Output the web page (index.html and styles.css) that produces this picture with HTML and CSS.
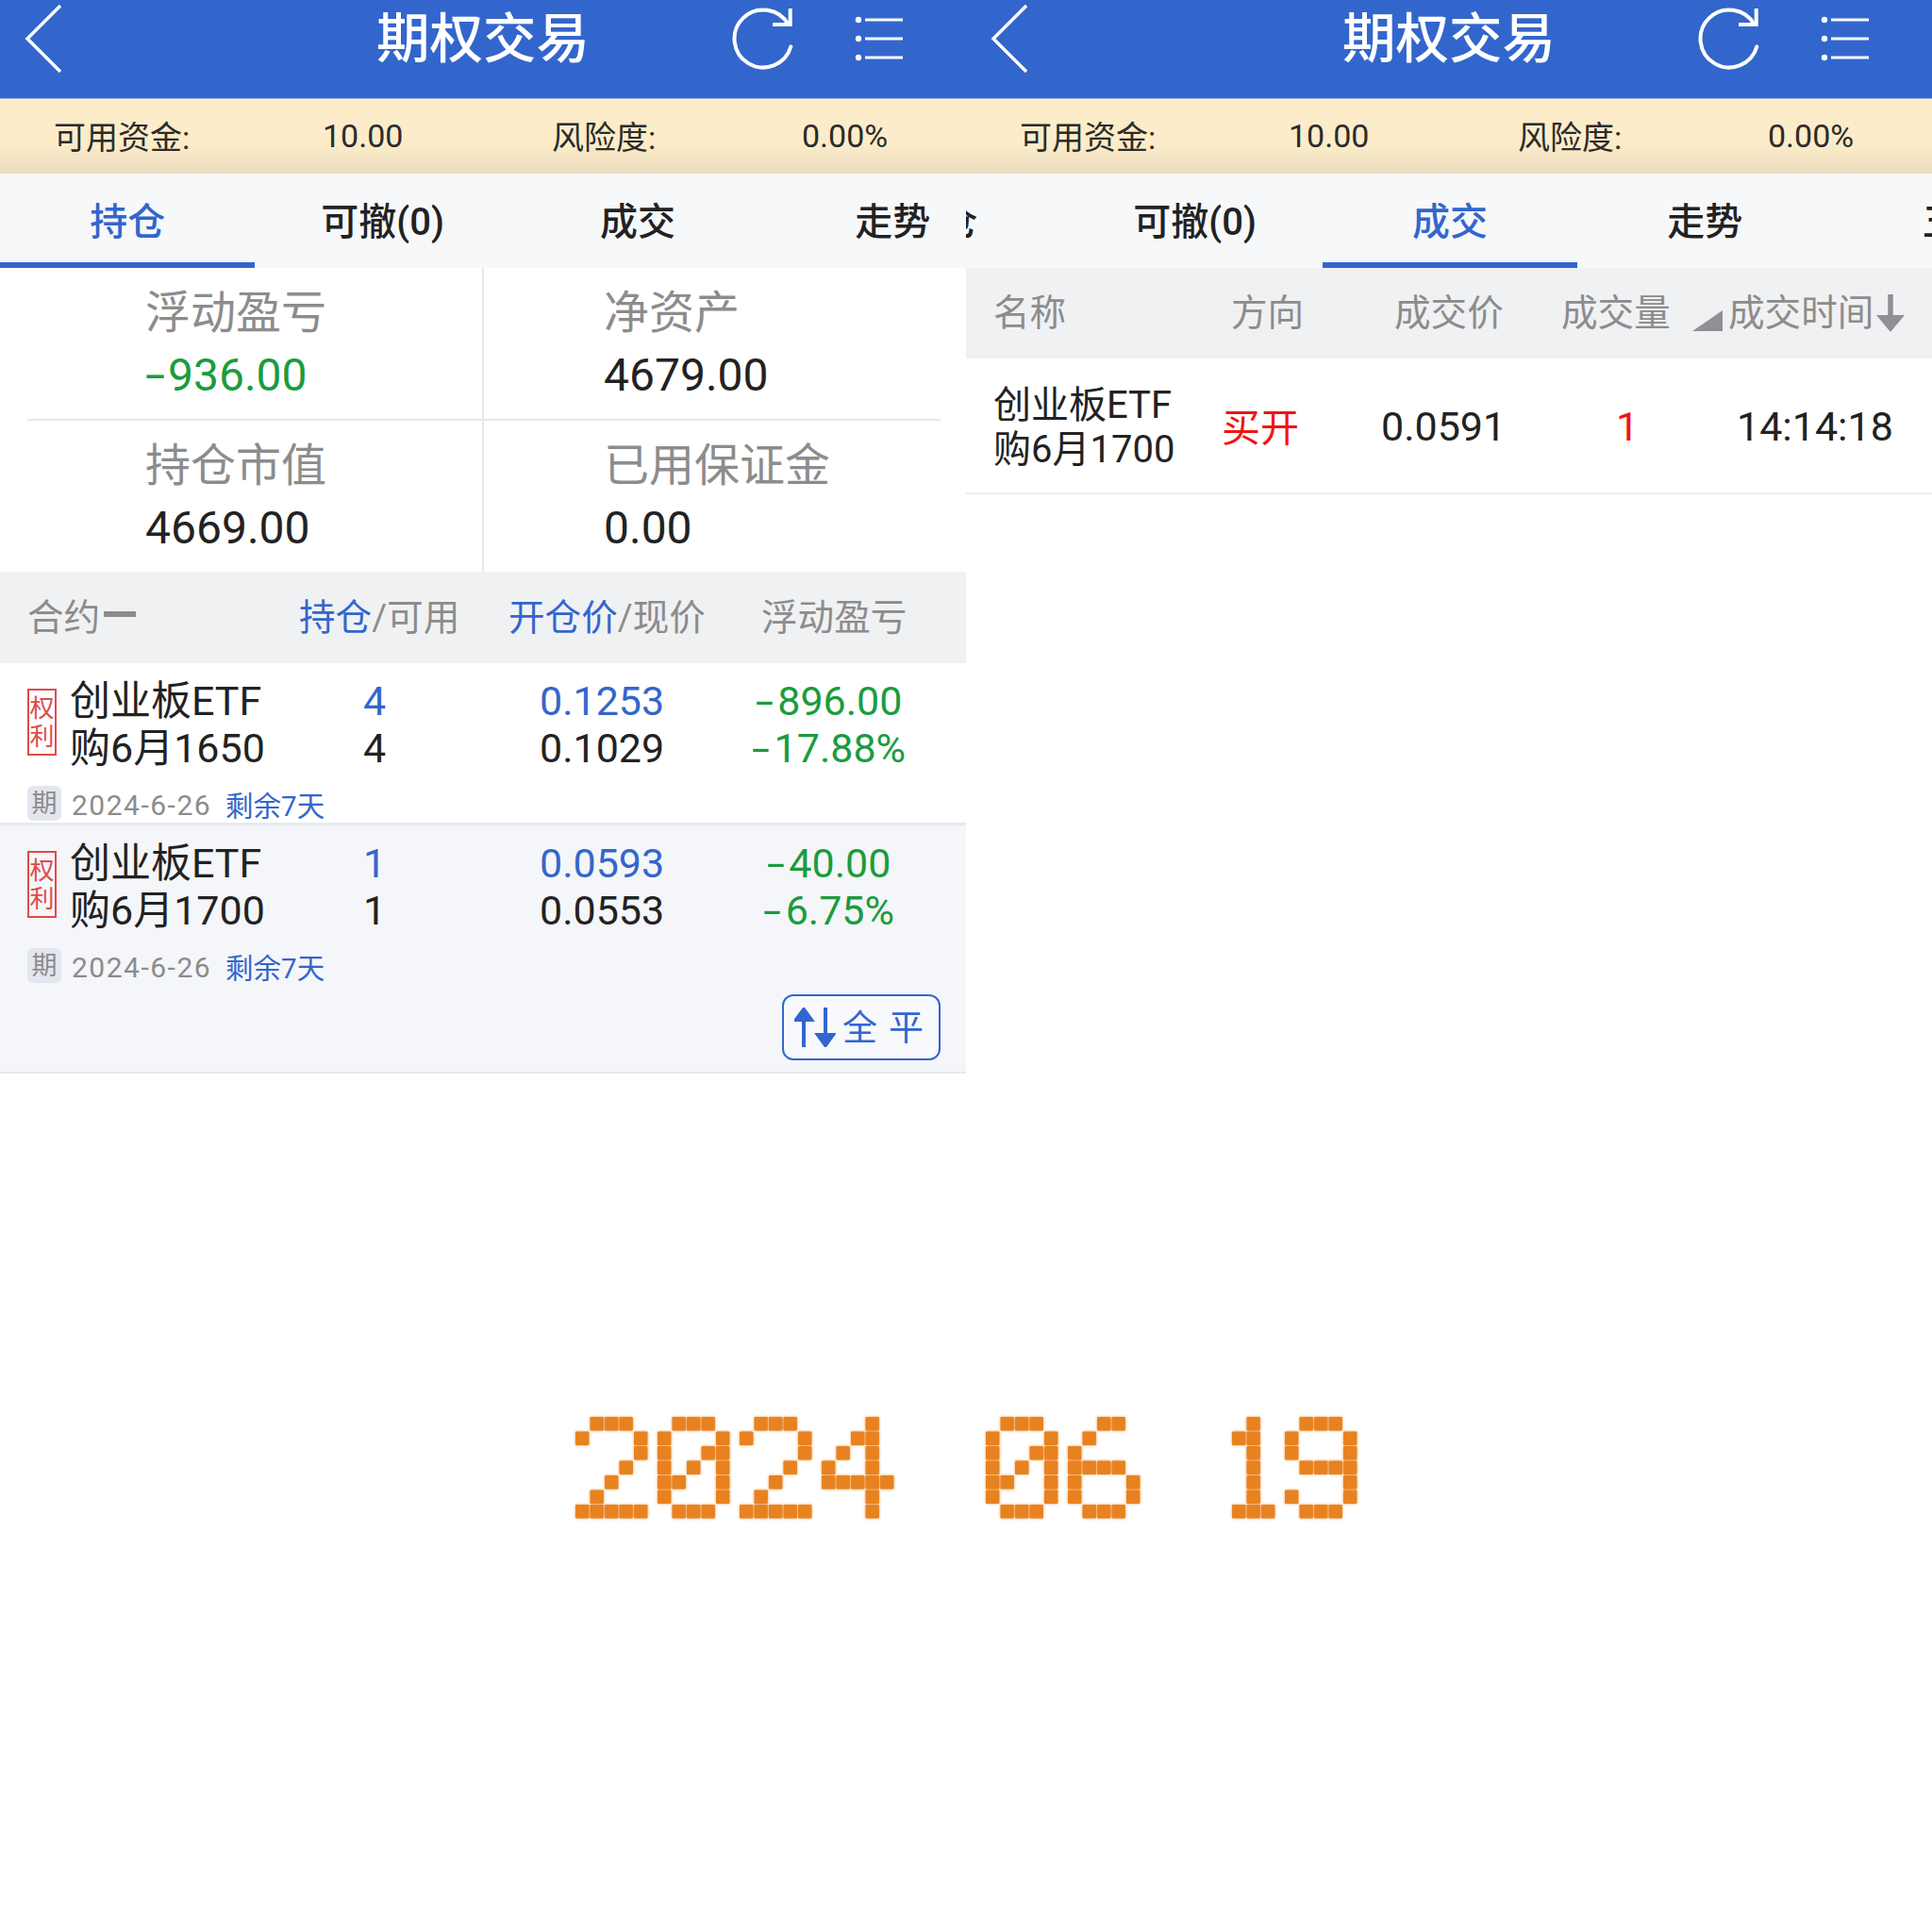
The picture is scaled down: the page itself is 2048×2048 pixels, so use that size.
FILE: index.html
```html
<!DOCTYPE html>
<html lang="zh-CN">
<head>
<meta charset="utf-8">
<title>期权交易</title>
<link rel="stylesheet" href="styles.css">
</head>
<body>
<svg class="defs" width="0" height="0" aria-hidden="true">
  <defs>
    <symbol id="ic-back" viewBox="0 0 44 80"><polyline points="39,6 4,41 39,76" fill="none" stroke="#fff" stroke-width="3.5"/></symbol>
    <symbol id="ic-refresh" viewBox="0 0 70 72"><path d="M62.3 43.5A30.5 30.5 0 1 1 59.6 20" fill="none" stroke="#fff" stroke-width="4" stroke-linecap="round"/><polyline points="61.7,3 61.7,20 43,20" fill="none" stroke="#fff" stroke-width="4"/></symbol>
    <symbol id="ic-list" viewBox="0 0 56 50"><circle cx="4" cy="5" r="3.2" fill="#fff"/><circle cx="4" cy="25" r="3.2" fill="#fff"/><circle cx="4" cy="45" r="3.2" fill="#fff"/><path d="M11 5H51M11 25H51M11 45H51" stroke="#fff" stroke-width="3"/></symbol>
    <symbol id="px-0" viewBox="0 0 78 109"><g class="px"><rect x="15.5" y="0"/><rect x="31" y="0"/><rect x="46.5" y="0"/><rect x="0" y="15.5"/><rect x="62" y="15.5"/><rect x="0" y="31"/><rect x="46.5" y="31"/><rect x="62" y="31"/><rect x="0" y="46.5"/><rect x="31" y="46.5"/><rect x="62" y="46.5"/><rect x="0" y="62"/><rect x="15.5" y="62"/><rect x="62" y="62"/><rect x="0" y="77.5"/><rect x="62" y="77.5"/><rect x="15.5" y="93"/><rect x="31" y="93"/><rect x="46.5" y="93"/></g></symbol>
    <symbol id="px-1" viewBox="0 0 47 109"><g class="px"><rect x="15.5" y="0"/><rect x="0" y="15.5"/><rect x="15.5" y="15.5"/><rect x="15.5" y="31"/><rect x="15.5" y="46.5"/><rect x="15.5" y="62"/><rect x="15.5" y="77.5"/><rect x="0" y="93"/><rect x="15.5" y="93"/><rect x="31" y="93"/></g></symbol>
    <symbol id="px-2" viewBox="0 0 78 109"><g class="px"><rect x="15.5" y="0"/><rect x="31" y="0"/><rect x="46.5" y="0"/><rect x="0" y="15.5"/><rect x="62" y="15.5"/><rect x="62" y="31"/><rect x="46.5" y="46.5"/><rect x="31" y="62"/><rect x="15.5" y="77.5"/><rect x="0" y="93"/><rect x="15.5" y="93"/><rect x="31" y="93"/><rect x="46.5" y="93"/><rect x="62" y="93"/></g></symbol>
    <symbol id="px-4" viewBox="0 0 78 109"><g class="px"><rect x="46.5" y="0"/><rect x="31" y="15.5"/><rect x="46.5" y="15.5"/><rect x="15.5" y="31"/><rect x="46.5" y="31"/><rect x="0" y="46.5"/><rect x="46.5" y="46.5"/><rect x="0" y="62"/><rect x="15.5" y="62"/><rect x="31" y="62"/><rect x="46.5" y="62"/><rect x="62" y="62"/><rect x="46.5" y="77.5"/><rect x="46.5" y="93"/></g></symbol>
    <symbol id="px-6" viewBox="0 0 78 109"><g class="px"><rect x="31" y="0"/><rect x="46.5" y="0"/><rect x="15.5" y="15.5"/><rect x="0" y="31"/><rect x="0" y="46.5"/><rect x="15.5" y="46.5"/><rect x="31" y="46.5"/><rect x="46.5" y="46.5"/><rect x="0" y="62"/><rect x="62" y="62"/><rect x="0" y="77.5"/><rect x="62" y="77.5"/><rect x="15.5" y="93"/><rect x="31" y="93"/><rect x="46.5" y="93"/></g></symbol>
    <symbol id="px-9" viewBox="0 0 78 109"><g class="px"><rect x="15.5" y="0"/><rect x="31" y="0"/><rect x="46.5" y="0"/><rect x="0" y="15.5"/><rect x="62" y="15.5"/><rect x="0" y="31"/><rect x="62" y="31"/><rect x="15.5" y="46.5"/><rect x="31" y="46.5"/><rect x="46.5" y="46.5"/><rect x="62" y="46.5"/><rect x="62" y="62"/><rect x="0" y="77.5"/><rect x="62" y="77.5"/><rect x="15.5" y="93"/><rect x="31" y="93"/><rect x="46.5" y="93"/></g></symbol>
  </defs>
</svg>

<main class="screens">
  <section class="panel">
    <header class="appbar">
      <div class="appbar-left"><svg class="ic-back"><use href="#ic-back"/></svg></div>
      <h1 class="title">期权交易</h1>
      <div class="appbar-right"><svg class="ic-refresh"><use href="#ic-refresh"/></svg><svg class="ic-list"><use href="#ic-list"/></svg></div>
    </header>
    <div class="funds"><span>可用资金:</span><span>10.00</span><span>风险度:</span><span>0.00%</span></div>
    <nav class="tabs">
      <div class="tab active">持仓</div><div class="tab">可撤(0)</div><div class="tab">成交</div><div class="tab">走势</div><div class="tab">五档</div>
    </nav>
    <div class="stats">
      <div class="stat-row">
        <div class="stat stat-l"><div class="stat-label">浮动盈亏</div><div class="stat-value green"><span class="neg">-</span>936.00</div></div>
        <div class="stat stat-r"><div class="stat-label">净资产</div><div class="stat-value">4679.00</div></div>
      </div>
      <div class="stat-rule"></div>
      <div class="stat-row">
        <div class="stat stat-l"><div class="stat-label">持仓市值</div><div class="stat-value">4669.00</div></div>
        <div class="stat stat-r"><div class="stat-label">已用保证金</div><div class="stat-value">0.00</div></div>
      </div>
    </div>
    <div class="pos-head">
      <div class="sort-name">合约<i class="dash"></i></div>
      <div><span class="blue">持仓</span>/可用</div>
      <div><span class="blue">开仓价</span>/现价</div>
      <div>浮动盈亏</div>
    </div>
    <article class="pos">
      <div class="pos-main">
        <div class="pos-name"><div class="right-tag">权<br>利</div><div class="lines">创业板ETF<br>购6月1650</div></div>
        <div class="lines"><span class="blue">4</span><br>4</div>
        <div class="lines"><span class="blue">0.1253</span><br>0.1029</div>
        <div class="lines pl green"><span class="neg">-</span>896.00<br><span class="neg">-</span>17.88%</div>
      </div>
      <div class="pos-meta"><span class="exp-tag">期</span><span class="exp-date">2024-6-26</span><span class="blue">剩余7天</span></div>
    </article>
    <article class="pos pos-open">
      <div class="pos-main">
        <div class="pos-name"><div class="right-tag">权<br>利</div><div class="lines">创业板ETF<br>购6月1700</div></div>
        <div class="lines"><span class="blue">1</span><br>1</div>
        <div class="lines"><span class="blue">0.0593</span><br>0.0553</div>
        <div class="lines pl green"><span class="neg">-</span>40.00<br><span class="neg">-</span>6.75%</div>
      </div>
      <div class="pos-meta"><span class="exp-tag">期</span><span class="exp-date">2024-6-26</span><span class="blue">剩余7天</span></div>
      <div class="pos-actions">
        <button class="close-all">
          <svg class="ic-swap" viewBox="0 0 44 42"><path d="M10 42V10M2 13L10 2L18 13Z M33 0V32M25 29L33 40L41 29Z" fill="#3366cc" stroke="#3366cc" stroke-width="4"/></svg>
          <span>全</span><span>平</span>
        </button>
      </div>
    </article>
  </section>

  <section class="panel">
    <header class="appbar">
      <div class="appbar-left"><svg class="ic-back"><use href="#ic-back"/></svg></div>
      <h1 class="title">期权交易</h1>
      <div class="appbar-right"><svg class="ic-refresh"><use href="#ic-refresh"/></svg><svg class="ic-list"><use href="#ic-list"/></svg></div>
    </header>
    <div class="funds"><span>可用资金:</span><span>10.00</span><span>风险度:</span><span>0.00%</span></div>
    <nav class="tabs tabs-scrolled">
      <div class="tab">持仓</div><div class="tab">可撤(0)</div><div class="tab active">成交</div><div class="tab">走势</div><div class="tab">五档</div>
    </nav>
    <div class="deal-head">
      <div>名称</div><div>方向</div><div>成交价</div><div>成交量</div>
      <div class="deal-sort">
        <svg class="ic-corner" viewBox="0 0 32 22"><polygon points="0,22 32,22 32,0" fill="#8f9095"/></svg>
        <span>成交时间</span>
        <svg class="ic-down" viewBox="0 0 30 40"><path d="M15 0V30" stroke="#8f9095" stroke-width="5.5"/><polygon points="0,22 30,22 15,40" fill="#8f9095"/></svg>
      </div>
    </div>
    <div class="deal-row">
      <div class="deal-name">创业板ETF<br>购6月1700</div>
      <div class="red dir">买开</div>
      <div>0.0591</div>
      <div class="red">1</div>
      <div>14:14:18</div>
    </div>
  </section>
</main>

<div class="pixel-date" role="img" aria-label="2024 06 19">
  <div class="px-group">
    <svg class="px-w5"><use href="#px-2"/></svg><svg class="px-w5"><use href="#px-0"/></svg><svg class="px-w5"><use href="#px-2"/></svg><svg class="px-w5"><use href="#px-4"/></svg>
  </div>
  <div class="px-group">
    <svg class="px-w5"><use href="#px-0"/></svg><svg class="px-w5"><use href="#px-6"/></svg>
  </div>
  <div class="px-group">
    <svg class="px-w3"><use href="#px-1"/></svg><svg class="px-w5"><use href="#px-9"/></svg>
  </div>
</div>
</body>
</html>
```
FILE: styles.css
```css
* { box-sizing: border-box; }
html, body { margin: 0; padding: 0; background: #fff; }
body {
  width: 2048px;
  height: 2048px;
  overflow: hidden;
  font-family: Roboto, "Noto Sans CJK SC", sans-serif;
  color: #222;
}
.defs { display: block; height: 0; }
.px rect { width: 14.4px; height: 14.4px; rx: 1px; fill: #e88220; }

.screens { display: flex; height: 1138px; }
.panel { width: 1024px; overflow: hidden; }

.appbar {
  height: 105px;
  background: #3366cc;
  display: grid;
  grid-template-columns: 1fr auto 1fr;
  align-items: start;
  border-bottom: 1px solid #9db3df;
}
.appbar-left { padding-left: 25px; display: flex; }
.ic-back { width: 44px; height: 80px; }
.title { margin: 0; font-size: 56.5px; font-weight: 500; color: #fff; line-height: 84px; }
.appbar-right { display: flex; justify-content: flex-end; align-items: flex-start; padding-right: 62px; gap: 60px; }
.ic-refresh { width: 70px; height: 72px; margin-top: 6px; }
.ic-list { width: 56px; height: 50px; margin-top: 16px; }

.funds {
  height: 79px;
  display: grid;
  grid-template-columns: 285px 243px 265px 1fr;
  padding: 0 0 2px 57px;
  align-items: center;
  font-size: 34px;
  color: #2b2b2b;
  background: linear-gradient(#fdecc9 0%, #fdecc9 60%, #e9dcbf 100%);
}

.tabs { height: 100px; display: flex; background: #f7f8fa; }
.tabs-scrolled { margin-left: -163px; }
.tab {
  flex: 0 0 270.4px;
  height: 100px;
  text-align: center;
  font-size: 40px;
  font-weight: 500;
  line-height: 104px;
  color: #222;
}
.tab.active { color: #3366cc; border-bottom: 6px solid #3366cc; }

.stats { height: 322px; position: relative; }
.stats::before {
  content: "";
  position: absolute;
  left: 511px;
  top: 0;
  bottom: 0;
  width: 2px;
  background: #e6e7ea;
}
.stat-row { display: flex; height: 160px; }
.stat-rule { height: 2px; margin: 0 27px 0 29px; background: #e6e7ea; }
.stat { width: 512px; padding-top: 15px; }
.stat-l { padding-left: 154px; }
.stat-r { padding-left: 128px; }
.stat-label { font-size: 48px; line-height: 66px; color: #8c8c8c; }
.stat-value { font-size: 48px; line-height: 66px; color: #222; }
.neg {
  display: inline-block;
  width: .55em;
  text-align: left;
  transform: scaleX(1.6);
  transform-origin: left center;
}
.stat-value .neg { width: .5em; }

.green { color: #1a9c3e; }
.blue { color: #3366cc; }
.red { color: #f01414; }

.pos-head {
  height: 97px;
  background: #f0f1f3;
  display: grid;
  grid-template-columns: 288px 222px 268px 1fr;
  padding: 0 0 8px 29px;
  align-items: center;
  font-size: 38.6px;
  color: #8c8c8c;
}
.sort-name { display: flex; align-items: center; gap: 4px; }
.dash { display: block; width: 34px; height: 6px; background: #8c8c8c; }

.pos { height: 172px; padding-top: 15px; background: #fff; border-bottom: 3px solid #e8e9ee; }
.pos-open { height: 264px; background: #f5f6f9; border-bottom: 3px solid #e8e9ee; }
.pos-main {
  display: grid;
  grid-template-columns: 356px 187px 188px 240px;
  padding-left: 29px;
  align-items: center;
  height: 100px;
}
.pos-name { display: flex; align-items: center; gap: 14px; }
.lines { font-size: 43px; line-height: 50px; white-space: nowrap; color: #222; }
.pl { text-align: center; color: #1a9c3e; padding-right: 3px; }
.right-tag {
  width: 31px;
  height: 71px;
  margin-bottom: 5px;
  border: 2px solid #e04a4a;
  color: #e04a4a;
  font-size: 26px;
  line-height: 30px;
  text-align: center;
  padding-top: 4px;
}
.pos-meta {
  display: flex;
  align-items: center;
  margin-top: 15px;
  padding-left: 29px;
  height: 37px;
  font-size: 29.5px;
}
.exp-tag {
  width: 36px;
  height: 37px;
  line-height: 39px;
  background: #e3e6ee;
  border-radius: 6px;
  color: #8c8c8c;
  font-size: 27px;
  text-align: center;
  margin-right: 11px;
}
.exp-date { color: #8c8c8c; margin: 3px 15px 0 0; letter-spacing: 1.5px; font-size: 30px; }
.pos-actions { display: flex; justify-content: flex-end; padding-right: 27px; margin-top: 12px; }
.close-all {
  width: 168px;
  height: 70px;
  border: 2px solid #3366cc;
  border-radius: 12px;
  background: #f8f9fc;
  color: #3366cc;
  font-family: inherit;
  font-size: 37px;
  display: flex;
  align-items: center;
  padding: 0 0 0 11px;
}
.close-all span { margin: 0 12px 4px 0; }
.ic-swap { width: 44px; height: 42px; margin-right: 7px; }

.deal-head {
  height: 96px;
  background: #f0f1f3;
  display: grid;
  grid-template-columns: 252px 173px 177px 139px 1fr;
  padding: 0 0 8px 29px;
  align-items: center;
  font-size: 38.6px;
  color: #8c8c8c;
}
.deal-sort { display: flex; align-items: center; white-space: nowrap; }
.deal-sort span { margin: 0 3px 0 6px; }
.ic-corner { width: 32px; height: 22px; margin-top: 24px; }
.ic-down { width: 30px; height: 40px; margin-top: 7px; }
.deal-row {
  height: 144px;
  display: grid;
  grid-template-columns: 243px 168px 249px 128px 1fr;
  padding: 2px 0 0 29px;
  align-items: center;
  font-size: 43px;
  color: #222;
  border-bottom: 2px solid #ecedf0;
}
.deal-name { font-size: 40px; line-height: 47px; white-space: nowrap; margin-top: 2px; }
.dir { font-size: 41px; margin: -4px 0 0 -1px; }
.deal-row .red { color: #f01414; }

.pixel-date {
  display: flex;
  justify-content: flex-start;
  gap: 96px;
  margin-top: 364px;
  padding-left: 610px;
}
.px-group { display: flex; gap: 9px; }
.px-group svg { height: 109px; filter: drop-shadow(0 0 1.5px rgba(232, 130, 32, .8)); overflow: visible; }
.px-w5 { width: 78px; }
.px-w3 { width: 47px; }
```
